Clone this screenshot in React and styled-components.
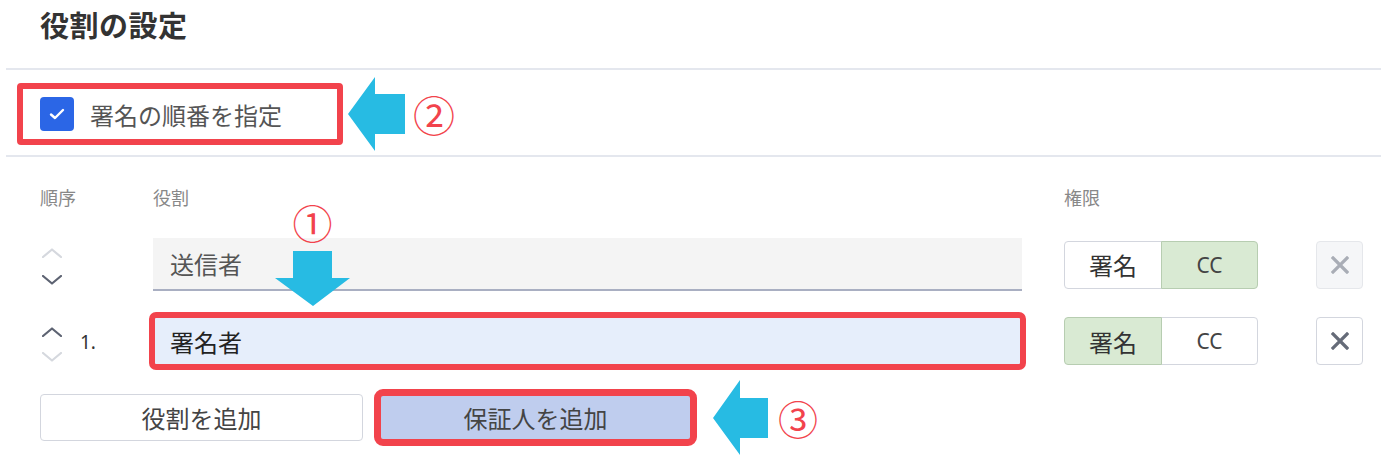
import React from "react";
import styled, { createGlobalStyle } from "styled-components";

const Global = createGlobalStyle`
  html, body { margin: 0; padding: 0; background: #fff; }
  body { font-family: "Noto Sans", "Noto Sans CJK JP", sans-serif; }
  * { box-sizing: border-box; }
`;

const RED = "#f2434c";
const CYAN = "#27bbe3";

const Page = styled.div`
  width: 1381px;
  height: 462px;
  overflow: hidden;
`;

const Title = styled.h2`
  margin: 0;
  height: 68px;
  padding: 6px 0 0 40px;
  font-size: 29px;
  line-height: 40px;
  font-weight: 700;
  color: #333;
  letter-spacing: 0.5px;
`;

const Divider = styled.div`
  margin-left: 6px;
  height: 2px;
  background: #e4e7ee;
`;

const OrderSection = styled.div`
  display: flex;
  align-items: center;
  height: 85px;
  padding: 13px 0 10px 17px;
`;

const CheckFrame = styled.label`
  display: flex;
  align-items: center;
  gap: 16px;
  width: 326px;
  height: 62px;
  padding-left: 17px;
  border: 6px solid ${RED};
  border-radius: 4px;
  font-size: 24px;
  color: #555;
`;

const CheckBox = styled.span`
  display: flex;
  align-items: center;
  justify-content: center;
  width: 34px;
  height: 34px;
  border-radius: 4px;
  background: #2b66e6;
`;

const SideArrow = styled.svg`
  flex: none;
  margin-left: ${(p) => p.$gap}px;
`;

const Circled = styled.span`
  font-family: "Noto Sans CJK JP", sans-serif;
  color: ${RED};
  font-size: ${(p) => p.$size}px;
  line-height: 1;
  margin-left: ${(p) => p.$gap || 0}px;
`;

const TableSection = styled.div`
  position: relative;
  padding: 28px 0 0 40px;
`;

const Grid = styled.div`
  display: grid;
  grid-template-columns: 113px 911px 252px 47px;
  grid-template-rows: 28px 53px 50px;
  row-gap: 25px;
  align-items: center;
`;

const HeadCell = styled.div`
  align-self: start;
  font-size: 18px;
  line-height: 26px;
  color: #888;
`;

const OrderCell = styled.div`
  display: flex;
  align-items: center;
  gap: 18px;
  padding-left: 2px;
  margin-top: ${(p) => p.$shift}px;
`;

const ChevStack = styled.div`
  display: flex;
  flex-direction: column;
  gap: ${(p) => p.$gap}px;
`;

const OrderNum = styled.span`
  font-size: 19px;
  color: #333;
  margin-top: -5px;
`;

const RoleInput = styled.div`
  display: flex;
  align-items: center;
  width: 869px;
  height: ${(p) => (p.$sender ? 53 : 50)}px;
  padding-left: 17px;
  font-size: 24px;
  color: ${(p) => (p.$sender ? "#555" : "#222")};
  background: ${(p) => (p.$sender ? "#f4f4f4" : "#e6eefb")};
  border-bottom: ${(p) => (p.$sender ? "2px solid #a9afc2" : "none")};
  outline: ${(p) => (p.$marked ? `6px solid ${RED}` : "none")};
  outline-offset: -2px;
  border-radius: ${(p) => (p.$marked ? "3px" : "0")};
`;

const Segmented = styled.div`
  display: flex;
  width: 195px;
  height: 48px;
`;

const Segment = styled.div`
  display: flex;
  align-items: center;
  justify-content: center;
  width: ${(p) => (p.$first ? 98 : 97)}px;
  height: 48px;
  font-size: ${(p) => (p.$latin ? 21 : 24)}px;
  color: ${(p) => (p.$latin ? "#444" : "#333")};
  background: ${(p) => (p.$on ? "#d9ead3" : "#fff")};
  border: 1px solid ${(p) => (p.$on ? "#b7cdb1" : "#d3d6de")};
  border-radius: ${(p) => (p.$first ? "4px 0 0 4px" : "0 4px 4px 0")};
  margin-left: ${(p) => (p.$first ? 0 : -1)}px;
  position: relative;
  z-index: ${(p) => (p.$on ? 1 : 0)};
`;

const DelButton = styled.div`
  display: flex;
  align-items: center;
  justify-content: center;
  width: 47px;
  height: 48px;
  border-radius: 4px;
  border: 1px solid ${(p) => (p.$disabled ? "#e5e7eb" : "#d3d6de")};
  background: ${(p) => (p.$disabled ? "#f5f6f8" : "#fff")};
  color: ${(p) => (p.$disabled ? "#a9adb6" : "#656b78")};
`;

const ButtonRow = styled.div`
  display: flex;
  align-items: center;
  margin-top: 14px;
  padding-left: 40px;
`;

const ActionButton = styled.div`
  display: flex;
  align-items: center;
  justify-content: center;
  width: ${(p) => p.$w}px;
  height: 47px;
  margin-left: ${(p) => p.$gap || 0}px;
  font-size: 24px;
  color: #444;
  border-radius: 4px;
  background: ${(p) => (p.$marked ? "#bfcdee" : "#fff")};
  border: 1px solid ${(p) => (p.$marked ? "#bfcdee" : "#d3d6de")};
  outline: ${(p) => (p.$marked ? `7px solid ${RED}` : "none")};
  outline-offset: -2px;
`;

const DownMark = styled.div`
  position: absolute;
  left: 275px;
  top: 45px;
  display: flex;
  flex-direction: column;
  align-items: center;
  width: 75px;
  gap: 9px;
`;

const Chevron = ({ up, dark }) => (
  <svg width="20" height="10" viewBox="0 0 20 10">
    <polyline
      points={up ? "1,9 10,1.5 19,9" : "1,1 10,8.5 19,1"}
      fill="none"
      stroke={dark ? "#5d6372" : "#d5d8de"}
      strokeWidth="2.2"
      strokeLinecap="round"
      strokeLinejoin="round"
    />
  </svg>
);

const XIcon = () => (
  <svg width="18" height="18" viewBox="0 0 18 18">
    <path d="M2 2 L16 16 M16 2 L2 16" stroke="currentColor" strokeWidth="3.2" strokeLinecap="square" />
  </svg>
);

export default function App() {
  return (
    <Page>
      <Global />
      <Title>役割の設定</Title>
      <Divider />
      <OrderSection>
        <CheckFrame>
          <CheckBox>
            <svg width="16" height="12" viewBox="0 0 16 12">
              <polyline points="2,6.5 6,10 14,2" fill="none" stroke="#fff" strokeWidth="2.4" strokeLinecap="round" strokeLinejoin="round" />
            </svg>
          </CheckBox>
          署名の順番を指定
        </CheckFrame>
        <SideArrow $gap={5} width="57" height="74" viewBox="0 0 57 74">
          <path d="M0 37 L27 0 V17 H57 V57 H27 V74 Z" fill={CYAN} />
        </SideArrow>
        <Circled $size={42} $gap={8}>②</Circled>
      </OrderSection>
      <Divider />
      <TableSection>
        <Grid>
          <HeadCell>順序</HeadCell>
          <HeadCell>役割</HeadCell>
          <HeadCell>権限</HeadCell>
          <div />

          <OrderCell $shift={4}>
            <ChevStack $gap={17}>
              <Chevron up />
              <Chevron dark />
            </ChevStack>
          </OrderCell>
          <RoleInput $sender>送信者</RoleInput>
          <Segmented>
            <Segment $first>署名</Segment>
            <Segment $latin $on>CC</Segment>
          </Segmented>
          <DelButton $disabled>
            <XIcon />
          </DelButton>

          <OrderCell $shift={6}>
            <ChevStack $gap={15}>
              <Chevron up dark />
              <Chevron />
            </ChevStack>
            <OrderNum>1.</OrderNum>
          </OrderCell>
          <RoleInput $marked>署名者</RoleInput>
          <Segmented>
            <Segment $first $on>署名</Segment>
            <Segment $latin>CC</Segment>
          </Segmented>
          <DelButton>
            <XIcon />
          </DelButton>
        </Grid>
        <DownMark>
          <Circled $size={40}>①</Circled>
          <svg width="75" height="55" viewBox="0 0 75 55">
            <path d="M18 0 H57 V27 H75 L38 55 L0 27 H18 Z" fill={CYAN} />
          </svg>
        </DownMark>
      </TableSection>
      <ButtonRow>
        <ActionButton $w={323}>役割を追加</ActionButton>
        <ActionButton $w={313} $gap={16} $marked>保証人を追加</ActionButton>
        <SideArrow $gap={21} width="55" height="75" viewBox="0 0 55 75">
          <path d="M0 38 L27 0 V18 H55 V58 H27 V75 Z" fill={CYAN} />
        </SideArrow>
        <Circled $size={40} $gap={10}>③</Circled>
      </ButtonRow>
    </Page>
  );
}
